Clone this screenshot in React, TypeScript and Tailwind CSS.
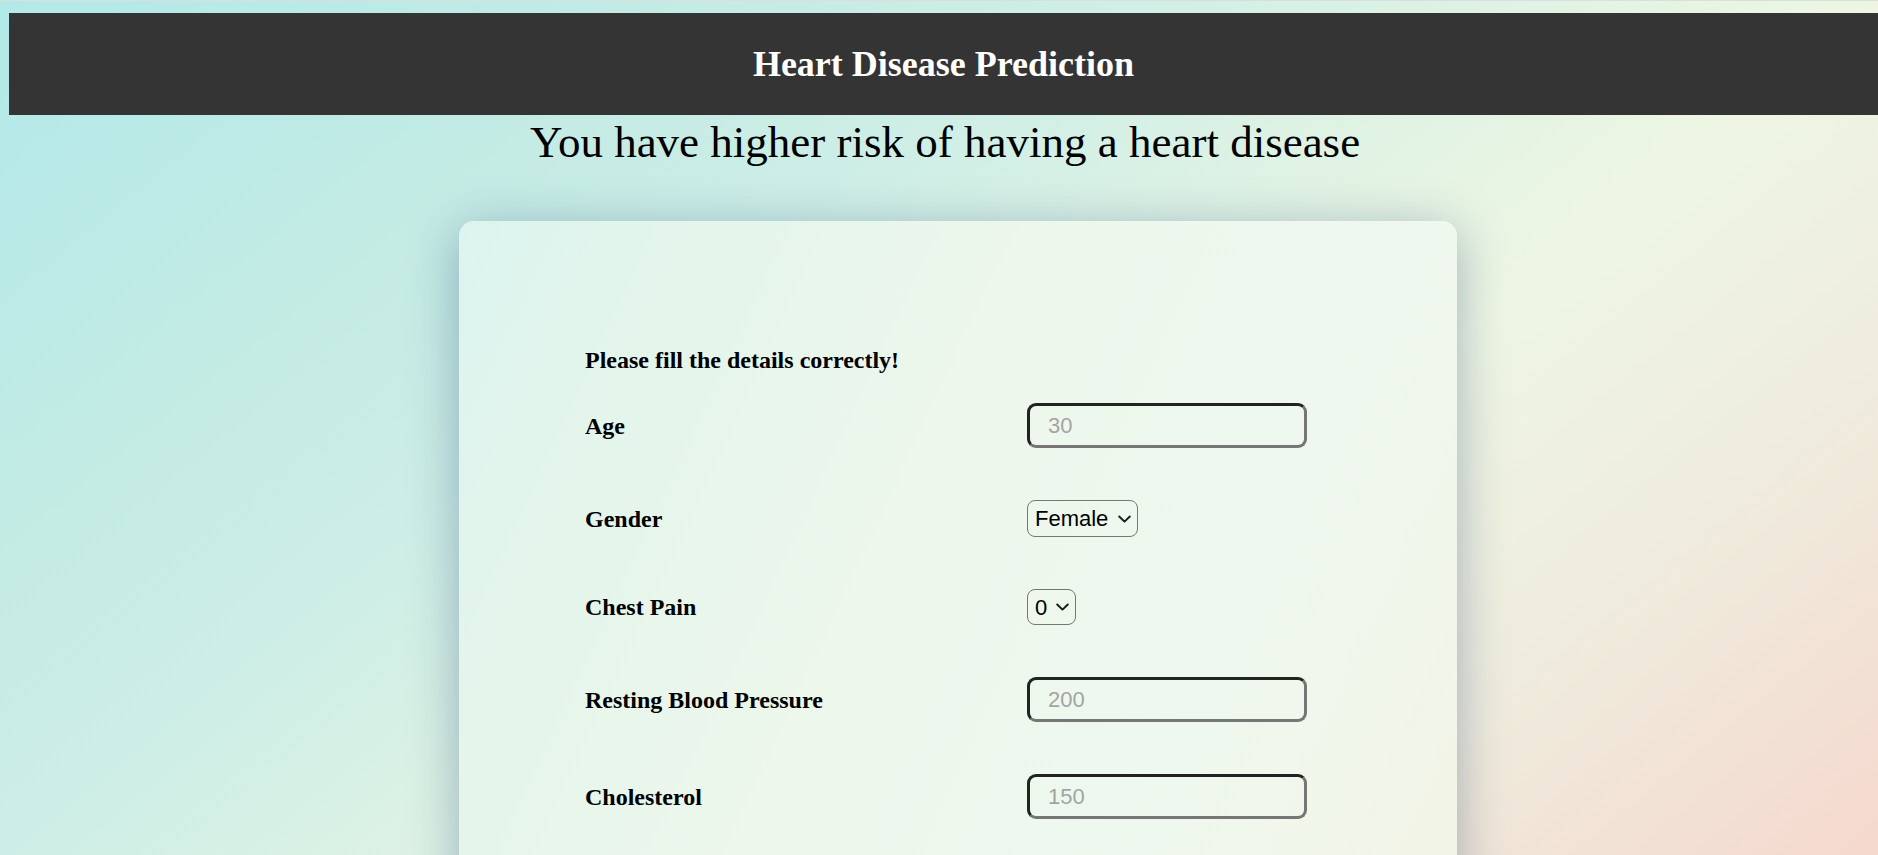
import { useState } from "react";

const serif = "font-['Liberation_Serif','Times_New_Roman',serif]";
const sans = "font-['Liberation_Sans',Arial,sans-serif]";

function Chevron() {
  return (
    <svg
      className="pointer-events-none absolute right-[7px] top-1/2 -translate-y-1/2"
      width="13"
      height="8"
      viewBox="0 0 13 8"
      fill="none"
    >
      <path d="M1.2 1.5 L6.5 6.6 L11.8 1.5" stroke="#1a1a1a" strokeWidth="1.9" strokeLinecap="round" strokeLinejoin="round" />
    </svg>
  );
}

function TextField({ placeholder }: { placeholder: string }) {
  return (
    <input
      type="text"
      placeholder={placeholder}
      className={`${sans} h-[45px] w-[280px] rounded-[9px] border-[3px] border-t-[#222222] border-l-[#222222] border-r-[#767676] border-b-[#767676] bg-transparent pl-[18px] text-[22px] text-black outline-none placeholder:text-[#a4a4a4]`}
    />
  );
}

function Choice({ options, width, height }: { options: string[]; width: string; height: string }) {
  const [value, setValue] = useState(options[0]);
  return (
    <div className={`relative ${width} ${height}`}>
      <select
        value={value}
        onChange={(e) => setValue(e.target.value)}
        className={`${sans} h-full w-full appearance-none rounded-[8px] border border-[#767676] bg-transparent pl-[7px] pr-[26px] text-[22px] text-black outline-none`}
      >
        {options.map((o) => (
          <option key={o}>{o}</option>
        ))}
      </select>
      <Chevron />
    </div>
  );
}

const rows = [
  { label: "Age", field: <TextField placeholder="30" /> },
  { label: "Gender", field: <Choice options={["Female", "Male"]} width="w-[111px]" height="h-[37px]" /> },
  { label: "Chest Pain", field: <Choice options={["0", "1", "2", "3"]} width="w-[49px]" height="h-[36px]" /> },
  { label: "Resting Blood Pressure", field: <TextField placeholder="200" /> },
  { label: "Cholesterol", field: <TextField placeholder="150" /> },
];

export default function App() {
  return (
    <div className="h-[855px] overflow-hidden bg-[linear-gradient(141deg,#b2e9e8_0%,#c4ebe4_24%,#cdeee6_36%,#eef6e3_64%,#efecdd_80%,#f5d8ce_100%)]">
      <div className="h-px w-full bg-[#d9dede]" />
      <header className="ml-[9px] mt-[12px] flex h-[102px] w-full items-center justify-center bg-[#343434] pr-[9px]">
        <h1 className={`${serif} text-[36px] font-bold text-white`}>Heart Disease Prediction</h1>
      </header>

      <h2 className={`${serif} mt-px w-full pl-[12px] text-center text-[45px] leading-[52px] text-black`}>
        You have higher risk of having a heart disease
      </h2>

      <form className="ml-[459px] mt-[53px] w-[998px] rounded-[15px] bg-[linear-gradient(115deg,#dcf4ef_0px,#e5f5eb_250px,#eef7ec_560px,#eff8ee_900px,#f3f3e6_1200px)] pb-[160px] pl-[126px] pt-[125px] shadow-[0_10px_50px_rgba(30,60,110,0.37)]">
        <p className={`${serif} text-[24px] font-bold leading-[28px] text-black`}>Please fill the details correctly!</p>
        <div className="mt-[29px] flex flex-col gap-[52px]">
          {rows.map((r) => (
            <div key={r.label} className="flex items-center">
              <label className={`${serif} w-[442px] text-[24px] font-bold leading-[28px] text-black`}>{r.label}</label>
              {r.field}
            </div>
          ))}
        </div>
      </form>
    </div>
  );
}
